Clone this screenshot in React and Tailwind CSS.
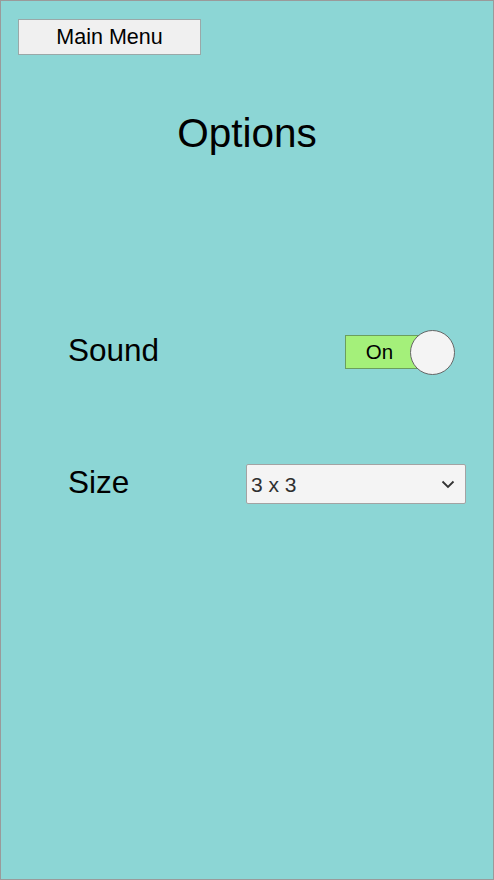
import React from "react";

export default function App() {
  return (
    <div
      className="flex h-[880px] w-[494px] flex-col border border-[#9a9a9a] bg-[#8cd6d5] text-black"
      style={{ fontFamily: "'Liberation Sans', Arial, sans-serif" }}
    >
      <div className="pl-[17px] pt-[18px]">
        <button className="flex h-[36px] w-[183px] items-center justify-center border border-[#9aa8a8] bg-[#f0f0f0] pt-[1px] text-[21.5px] leading-none">
          Main Menu
        </button>
      </div>

      <h1 className="mt-[54px] text-center text-[40.5px] leading-[48px]">Options</h1>

      <div className="mt-[171px] flex h-[48px] items-center pl-[67px] pr-[38px]">
        <span className="mb-[2px] text-[31.5px] leading-none">Sound</span>
        <div className="ml-auto flex items-center">
          <div className="flex h-[34px] w-[75px] items-center justify-center border border-[#6b9e5e] bg-[#a4f07a] pr-[6px] text-[20.5px] leading-none">
            On
          </div>
          <div className="-ml-[10px] h-[45px] w-[45px] rounded-full border border-[#666] bg-[#f4f4f4]" />
        </div>
      </div>

      <div className="mt-[84px] flex h-[48px] items-center pl-[67px] pr-[27px]">
        <span className="mb-[2px] text-[31.5px] leading-none">Size</span>
        <div className="ml-auto flex h-[40px] w-[220px] items-center justify-between rounded-[2px] border border-[#a3a3a3] bg-[#f4f4f4] pl-[4px] pr-[10px] text-[21px] leading-none text-[#303030]">
          <span>3 x 3</span>
          <svg width="14" height="9" viewBox="0 0 14 9" fill="none">
            <path d="M1.5 1.5 L7 7 L12.5 1.5" stroke="#333" strokeWidth="1.8" />
          </svg>
        </div>
      </div>
    </div>
  );
}
